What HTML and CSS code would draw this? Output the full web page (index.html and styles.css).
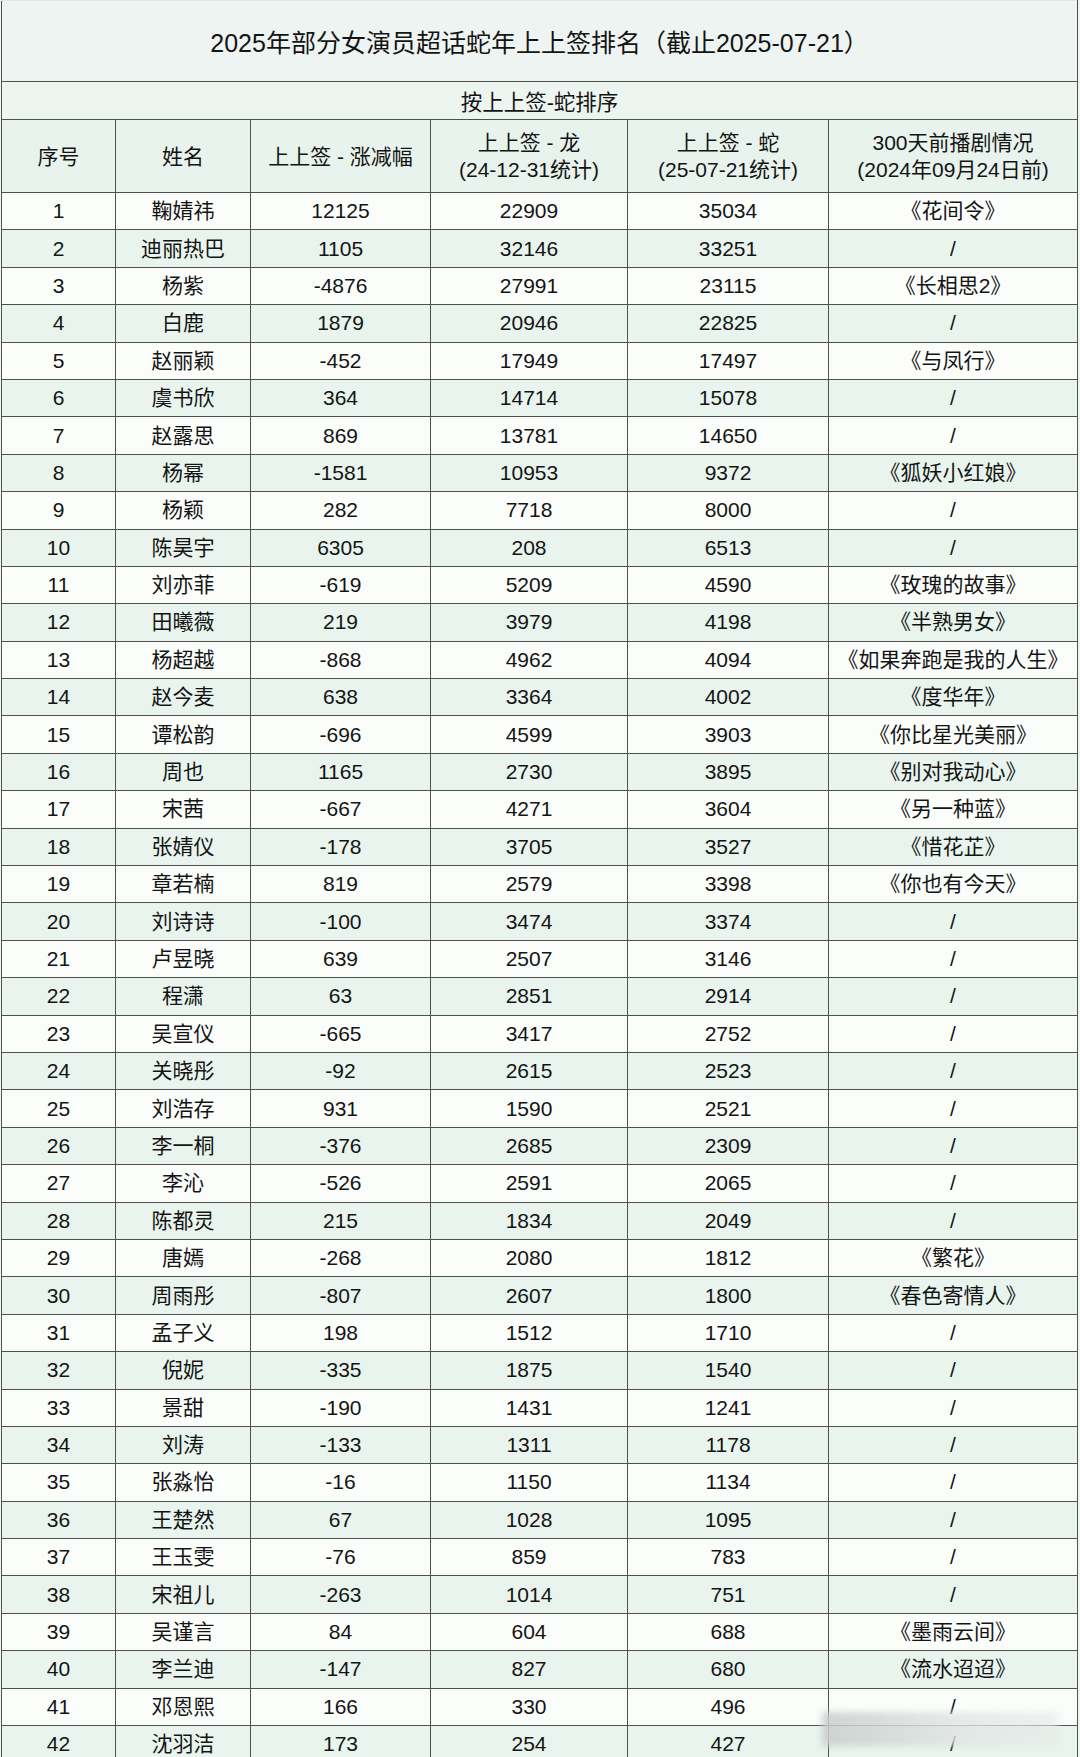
FILE: index.html
```html
<!DOCTYPE html>
<html lang="zh-CN">
<head>
<meta charset="utf-8">
<title>2025年部分女演员超话蛇年上上签排名</title>
<link rel="stylesheet" href="styles.css">
</head>
<body>
<div class="page">
<table class="rank">
<colgroup>
<col class="c1"><col class="c2"><col class="c3"><col class="c4"><col class="c5"><col class="c6">
</colgroup>
<thead>
<tr class="title"><th colspan="6">2025年部分女演员超话蛇年上上签排名（截止2025-07-21）</th></tr>
<tr class="sub"><th colspan="6">按上上签-蛇排序</th></tr>
<tr class="head">
<th>序号</th><th>姓名</th><th>上上签 - 涨减幅</th>
<th>上上签 - 龙<br>(24-12-31统计)</th>
<th>上上签 - 蛇<br>(25-07-21统计)</th>
<th>300天前播剧情况<br>(2024年09月24日前)</th>
</tr>
</thead>
<tbody>
<tr><td>1</td><td>鞠婧祎</td><td>12125</td><td>22909</td><td>35034</td><td>《花间令》</td></tr>
<tr><td>2</td><td>迪丽热巴</td><td>1105</td><td>32146</td><td>33251</td><td>/</td></tr>
<tr><td>3</td><td>杨紫</td><td>-4876</td><td>27991</td><td>23115</td><td>《长相思2》</td></tr>
<tr><td>4</td><td>白鹿</td><td>1879</td><td>20946</td><td>22825</td><td>/</td></tr>
<tr><td>5</td><td>赵丽颖</td><td>-452</td><td>17949</td><td>17497</td><td>《与凤行》</td></tr>
<tr><td>6</td><td>虞书欣</td><td>364</td><td>14714</td><td>15078</td><td>/</td></tr>
<tr><td>7</td><td>赵露思</td><td>869</td><td>13781</td><td>14650</td><td>/</td></tr>
<tr><td>8</td><td>杨幂</td><td>-1581</td><td>10953</td><td>9372</td><td>《狐妖小红娘》</td></tr>
<tr><td>9</td><td>杨颖</td><td>282</td><td>7718</td><td>8000</td><td>/</td></tr>
<tr><td>10</td><td>陈昊宇</td><td>6305</td><td>208</td><td>6513</td><td>/</td></tr>
<tr><td>11</td><td>刘亦菲</td><td>-619</td><td>5209</td><td>4590</td><td>《玫瑰的故事》</td></tr>
<tr><td>12</td><td>田曦薇</td><td>219</td><td>3979</td><td>4198</td><td>《半熟男女》</td></tr>
<tr><td>13</td><td>杨超越</td><td>-868</td><td>4962</td><td>4094</td><td>《如果奔跑是我的人生》</td></tr>
<tr><td>14</td><td>赵今麦</td><td>638</td><td>3364</td><td>4002</td><td>《度华年》</td></tr>
<tr><td>15</td><td>谭松韵</td><td>-696</td><td>4599</td><td>3903</td><td>《你比星光美丽》</td></tr>
<tr><td>16</td><td>周也</td><td>1165</td><td>2730</td><td>3895</td><td>《别对我动心》</td></tr>
<tr><td>17</td><td>宋茜</td><td>-667</td><td>4271</td><td>3604</td><td>《另一种蓝》</td></tr>
<tr><td>18</td><td>张婧仪</td><td>-178</td><td>3705</td><td>3527</td><td>《惜花芷》</td></tr>
<tr><td>19</td><td>章若楠</td><td>819</td><td>2579</td><td>3398</td><td>《你也有今天》</td></tr>
<tr><td>20</td><td>刘诗诗</td><td>-100</td><td>3474</td><td>3374</td><td>/</td></tr>
<tr><td>21</td><td>卢昱晓</td><td>639</td><td>2507</td><td>3146</td><td>/</td></tr>
<tr><td>22</td><td>程潇</td><td>63</td><td>2851</td><td>2914</td><td>/</td></tr>
<tr><td>23</td><td>吴宣仪</td><td>-665</td><td>3417</td><td>2752</td><td>/</td></tr>
<tr><td>24</td><td>关晓彤</td><td>-92</td><td>2615</td><td>2523</td><td>/</td></tr>
<tr><td>25</td><td>刘浩存</td><td>931</td><td>1590</td><td>2521</td><td>/</td></tr>
<tr><td>26</td><td>李一桐</td><td>-376</td><td>2685</td><td>2309</td><td>/</td></tr>
<tr><td>27</td><td>李沁</td><td>-526</td><td>2591</td><td>2065</td><td>/</td></tr>
<tr><td>28</td><td>陈都灵</td><td>215</td><td>1834</td><td>2049</td><td>/</td></tr>
<tr><td>29</td><td>唐嫣</td><td>-268</td><td>2080</td><td>1812</td><td>《繁花》</td></tr>
<tr><td>30</td><td>周雨彤</td><td>-807</td><td>2607</td><td>1800</td><td>《春色寄情人》</td></tr>
<tr><td>31</td><td>孟子义</td><td>198</td><td>1512</td><td>1710</td><td>/</td></tr>
<tr><td>32</td><td>倪妮</td><td>-335</td><td>1875</td><td>1540</td><td>/</td></tr>
<tr><td>33</td><td>景甜</td><td>-190</td><td>1431</td><td>1241</td><td>/</td></tr>
<tr><td>34</td><td>刘涛</td><td>-133</td><td>1311</td><td>1178</td><td>/</td></tr>
<tr><td>35</td><td>张淼怡</td><td>-16</td><td>1150</td><td>1134</td><td>/</td></tr>
<tr><td>36</td><td>王楚然</td><td>67</td><td>1028</td><td>1095</td><td>/</td></tr>
<tr><td>37</td><td>王玉雯</td><td>-76</td><td>859</td><td>783</td><td>/</td></tr>
<tr><td>38</td><td>宋祖儿</td><td>-263</td><td>1014</td><td>751</td><td>/</td></tr>
<tr><td>39</td><td>吴谨言</td><td>84</td><td>604</td><td>688</td><td>《墨雨云间》</td></tr>
<tr><td>40</td><td>李兰迪</td><td>-147</td><td>827</td><td>680</td><td>《流水迢迢》</td></tr>
<tr><td>41</td><td>邓恩熙</td><td>166</td><td>330</td><td>496</td><td>/</td></tr>
<tr><td>42</td><td>沈羽洁</td><td>173</td><td>254</td><td>427</td><td>/</td></tr>
</tbody>
</table>
<div class="watermark"></div>
</div>
</body>
</html>
```
FILE: styles.css
```css
html, body {
  margin: 0;
  padding: 0;
  background: #f2f6f3;
}
body {
  font-family: "Liberation Sans", "Noto Sans CJK SC", sans-serif;
  color: #141414;
  overflow: hidden;
}
.page {
  position: relative;
  width: 1080px;
  height: 1757px;
  overflow: hidden;
}
.rank {
  margin-left: 1px;
  width: 1076px;
  table-layout: fixed;
  border-collapse: collapse;
  font-size: 21px;
}
.c1 { width: 114px; }
.c2 { width: 135px; }
.c3 { width: 180px; }
.c4 { width: 197px; }
.c5 { width: 201px; }
.c6 { width: 249px; }
.rank th, .rank td {
  border: 1px solid #505050;
  padding: 0;
  text-align: center;
  vertical-align: middle;
  font-weight: normal;
  white-space: nowrap;
}
.title th {
  height: 80px;
  font-size: 25px;
  background: #eef4f1;
  border-top-color: #dfe6e2;
}
.sub th {
  height: 37px;
  font-size: 21.5px;
  background: #edf5f0;
}
.head th {
  height: 72px;
  line-height: 27px;
  background: #e9f3ed;
}
.rank tbody tr {
  height: 37.4px;
}
.rank tbody td {
  line-height: 24px;
}
.rank tbody tr:nth-child(odd) td {
  background: #fbfdfb;
}
.rank tbody tr:nth-child(even) td {
  background: #e8f4ed;
}
.watermark {
  position: absolute;
  left: 822px;
  top: 1712px;
  width: 236px;
  height: 34px;
  background: linear-gradient(90deg, rgba(200,205,203,0.85), rgba(225,229,227,0.8) 60%, rgba(230,233,231,0.6));
  filter: blur(3px);
}
```
